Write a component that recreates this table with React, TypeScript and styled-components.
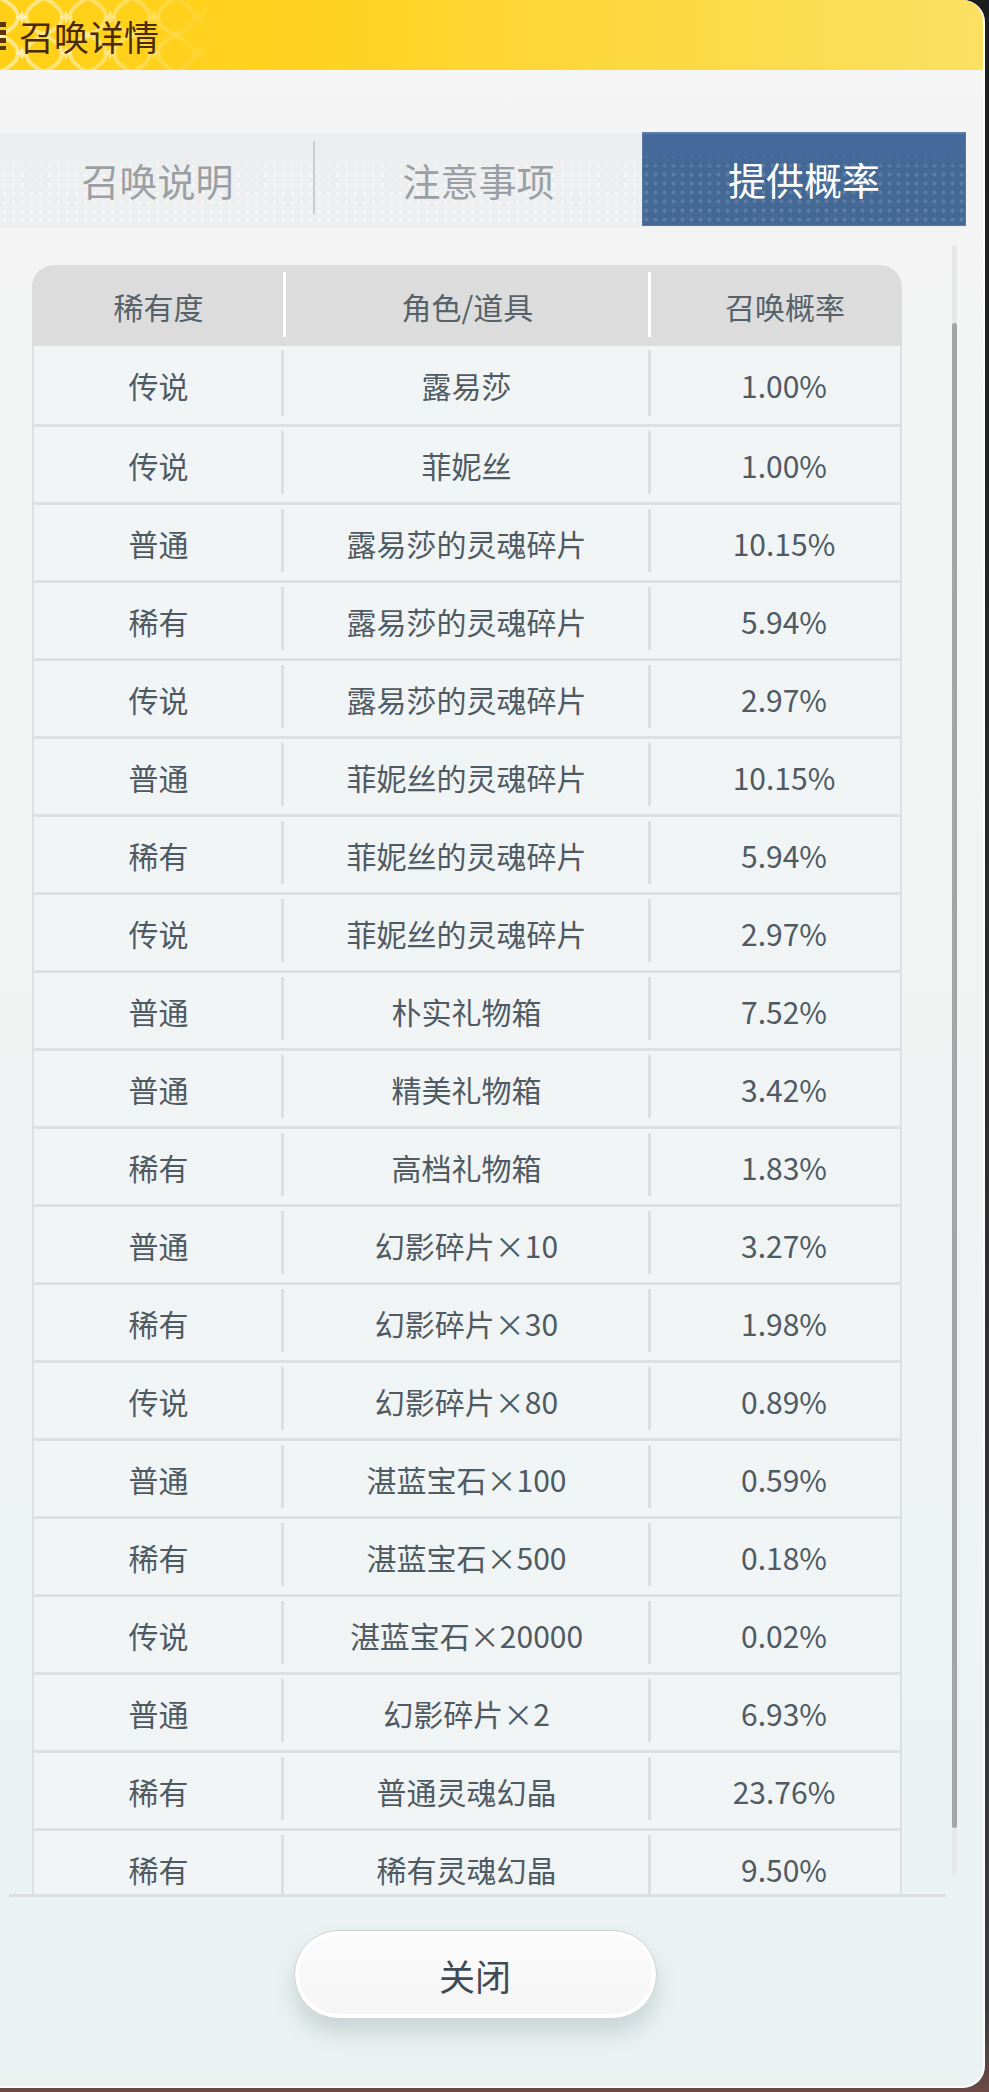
import styled, { createGlobalStyle } from 'styled-components';

const GlobalStyle = createGlobalStyle`
  html, body {
    margin: 0;
    padding: 0;
    background: #2e2e2e;
  }
  body {
    font-family: "Noto Sans CJK SC", "Noto Sans", sans-serif;
  }
`;

const Screen = styled.div`
  width: 989px;
  height: 2092px;
  overflow: hidden;
  background: linear-gradient(180deg, #1d1d1d 0%, #3b3b3b 96%, #6b4a44 100%);
`;

const Panel = styled.div`
  width: 983px;
  height: 2086px;
  display: flex;
  flex-direction: column;
  border-right: 2px solid #fbfcfc;
  border-bottom: 2px solid #fbfcfc;
  border-radius: 0 22px 22px 0;
  overflow: hidden;
  background: linear-gradient(180deg, #f5f5f5 0%, #f1f3f3 50%, #eaf2f2 100%);
`;

const Header = styled.div`
  position: relative;
  height: 70px;
  flex: none;
  display: flex;
  align-items: center;
  background: linear-gradient(90deg, #ffd015 0%, #ffd324 35%, #fdda45 70%, #fbe062 100%);
`;

const PatternSvg = styled.svg`
  position: absolute;
  left: 0;
  top: 0;
`;

const Bars = styled.span`
  position: relative;
  width: 6px;
  height: 28px;
  margin-right: 13px;
  margin-top: 2px;
  background: repeating-linear-gradient(180deg, #5a3508 0 5px, transparent 5px 8px);
`;

const Title = styled.h1`
  position: relative;
  margin: 0;
  font-size: 35px;
  font-weight: 400;
  line-height: 1;
  color: #4b2b06;
`;

const TabStrip = styled.div`
  margin-top: 63px;
  width: 966px;
  height: 94px;
  flex: none;
  display: flex;
  align-items: stretch;
  background:
    linear-gradient(180deg, #edeeef 0 28%, rgba(237, 238, 239, 0) 40%),
    radial-gradient(circle, rgba(255, 255, 255, 0.45) 1.5px, transparent 2.2px) 0 2px / 9px 9px,
    #eceeef;
`;

const Tab = styled.div<{ $w: number; $active?: boolean; $divider?: boolean }>`
  position: relative;
  width: ${p => p.$w}px;
  display: flex;
  align-items: center;
  justify-content: center;
  padding-bottom: 2px;
  font-size: 38px;
  color: ${p => (p.$active ? '#ffffff' : '#9b9fa3')};
  ${p =>
    p.$active &&
    `
    margin-top: -1px;
    margin-bottom: 1px;
    background:
      linear-gradient(180deg, #44699a 0 22%, rgba(68,105,148,0) 40%),
      radial-gradient(circle, rgba(112, 142, 180, 0.55) 1.7px, transparent 2.4px) 0 2px / 9px 9px,
      #446994;
    box-shadow: inset 0 2px 0 #5c80aa, inset 0 0 0 1px #587ca6;
  `}
  ${p =>
    p.$divider &&
    `
    &::after {
      content: '';
      position: absolute;
      right: 0;
      top: 8px;
      bottom: 13px;
      width: 2px;
      background: #cbcecf;
    }
  `}
`;

const ScrollRow = styled.div`
  margin-top: 18px;
  display: flex;
  align-items: flex-start;
  flex: none;
`;

const Viewport = styled.div`
  margin-left: 9px;
  width: 937px;
  height: 1652px;
  padding: 20px 0 0 23px;
  box-sizing: border-box;
  overflow: hidden;
  border-bottom: 3px solid #dcdfe1;
`;

const Track = styled.div`
  margin-left: 6px;
  width: 5px;
  height: 1630px;
  border-radius: 3px;
  background: #e5e7e8;
  display: flex;
  flex-direction: column;
`;

const Thumb = styled.div`
  margin-top: 78px;
  height: 1505px;
  border-radius: 3px;
  background: #a2a4a6;
`;

const Table = styled.div`
  width: 870px;
`;

const HeadRow = styled.div`
  height: 81px;
  display: grid;
  grid-template-columns: 253px 365px 252px;
  background: #dcdcdc;
  border-radius: 22px 22px 0 0;
`;

const Row = styled.div`
  height: 78px;
  box-sizing: border-box;
  display: grid;
  grid-template-columns: 249px 367px 250px;
  background: #f1f4f5;
  border-left: 2px solid #dde0e2;
  border-right: 2px solid #dde0e2;

  & + & {
    border-top: 3px solid #dde0e2;
  }
`;

const Cell = styled.div<{ $head?: boolean; $shift?: boolean }>`
  position: relative;
  display: flex;
  align-items: center;
  justify-content: center;
  padding-left: ${p => (p.$shift ? '18px' : '0')};
  font-size: 30px;
  color: ${p => (p.$head ? '#56616a' : '#4f5a63')};
  white-space: nowrap;

  &:not(:first-child)::before {
    content: '';
    position: absolute;
    left: -2px;
    top: ${p => (p.$head ? '7px' : '4px')};
    bottom: ${p => (p.$head ? '9px' : '8px')};
    width: 3px;
    background: ${p => (p.$head ? '#ffffff' : '#dcdfe1')};
  }
`;

const Footer = styled.div`
  width: 950px;
  padding-top: 33px;
  display: flex;
  justify-content: center;
`;

const CloseButton = styled.button`
  width: 363px;
  height: 89px;
  border-radius: 45px;
  border: 1px solid #cdd3d5;
  background: linear-gradient(180deg, #fbfbfb 0%, #f5f5f5 100%);
  box-shadow: inset 0 0 0 4px #ffffff, 0 14px 22px rgba(70, 90, 100, 0.2);
  font-family: "Noto Sans CJK SC", "Noto Sans", sans-serif;
  font-size: 36px;
  color: #3f4a54;
  padding: 0;
`;

const rows: [string, string, string][] = [
  ['传说', '露易莎', '1.00%'],
  ['传说', '菲妮丝', '1.00%'],
  ['普通', '露易莎的灵魂碎片', '10.15%'],
  ['稀有', '露易莎的灵魂碎片', '5.94%'],
  ['传说', '露易莎的灵魂碎片', '2.97%'],
  ['普通', '菲妮丝的灵魂碎片', '10.15%'],
  ['稀有', '菲妮丝的灵魂碎片', '5.94%'],
  ['传说', '菲妮丝的灵魂碎片', '2.97%'],
  ['普通', '朴实礼物箱', '7.52%'],
  ['普通', '精美礼物箱', '3.42%'],
  ['稀有', '高档礼物箱', '1.83%'],
  ['普通', '幻影碎片×10', '3.27%'],
  ['稀有', '幻影碎片×30', '1.98%'],
  ['传说', '幻影碎片×80', '0.89%'],
  ['普通', '湛蓝宝石×100', '0.59%'],
  ['稀有', '湛蓝宝石×500', '0.18%'],
  ['传说', '湛蓝宝石×20000', '0.02%'],
  ['普通', '幻影碎片×2', '6.93%'],
  ['稀有', '普通灵魂幻晶', '23.76%'],
  ['稀有', '稀有灵魂幻晶', '9.50%'],
];

function star(cx: number, cy: number, r: number) {
  const s = r * 0.28;
  return `M${cx} ${cy - r} L${cx + s} ${cy - s} L${cx + r} ${cy} L${cx + s} ${cy + s} L${cx} ${cy + r} L${cx - s} ${cy + s} L${cx - r} ${cy} L${cx - s} ${cy - s} Z`;
}

function HeaderPattern() {
  const cols = [0, 1, 2, 3, 4, 5];
  return (
    <PatternSvg width="260" height="70" viewBox="0 0 260 70">
      <defs>
        <linearGradient id="fade" x1="0" x2="1" y1="0" y2="0">
          <stop offset="0" stopColor="#fff" stopOpacity="1" />
          <stop offset="0.45" stopColor="#fff" stopOpacity="0.6" />
          <stop offset="0.85" stopColor="#fff" stopOpacity="0" />
        </linearGradient>
        <mask id="fadeMask">
          <rect width="260" height="70" fill="url(#fade)" />
        </mask>
      </defs>
      <g mask="url(#fadeMask)">
        <g fill="none" stroke="#fff3c4" strokeWidth="4" opacity="0.7">
          {cols.map(i => {
            const x = i * 44;
            return (
              <g key={i}>
                <path d={`M${x} -2 C${x + 24} 10 ${x + 24} 24 ${x} 35 C${x + 24} 46 ${x + 24} 60 ${x} 72`} />
                <path d={`M${x + 44} -2 C${x + 20} 10 ${x + 20} 24 ${x + 44} 35 C${x + 20} 46 ${x + 20} 60 ${x + 44} 72`} />
              </g>
            );
          })}
        </g>
        <g fill="#fff6d6" opacity="0.85">
          {cols.map(i => (
            <g key={i}>
              <path d={star(i * 44 + 22, 17, 7)} />
              <path d={star(i * 44 + 22, 53, 7)} />
              <path d={star(i * 44, 35, 5)} />
            </g>
          ))}
        </g>
      </g>
    </PatternSvg>
  );
}

export default function App() {
  return (
    <Screen>
      <GlobalStyle />
      <Panel>
        <Header>
          <HeaderPattern />
          <Bars />
          <Title>召唤详情</Title>
        </Header>

        <TabStrip>
          <Tab $w={315} $divider>召唤说明</Tab>
          <Tab $w={327}>注意事项</Tab>
          <Tab $w={324} $active>提供概率</Tab>
        </TabStrip>

        <ScrollRow>
          <Viewport>
            <Table>
              <HeadRow>
                <Cell $head>稀有度</Cell>
                <Cell $head>角色/道具</Cell>
                <Cell $head $shift>召唤概率</Cell>
              </HeadRow>
              {rows.map(([rarity, item, rate], i) => (
                <Row key={i}>
                  <Cell>{rarity}</Cell>
                  <Cell>{item}</Cell>
                  <Cell $shift>{rate}</Cell>
                </Row>
              ))}
            </Table>
          </Viewport>
          <Track>
            <Thumb />
          </Track>
        </ScrollRow>

        <Footer>
          <CloseButton>关闭</CloseButton>
        </Footer>
      </Panel>
    </Screen>
  );
}
